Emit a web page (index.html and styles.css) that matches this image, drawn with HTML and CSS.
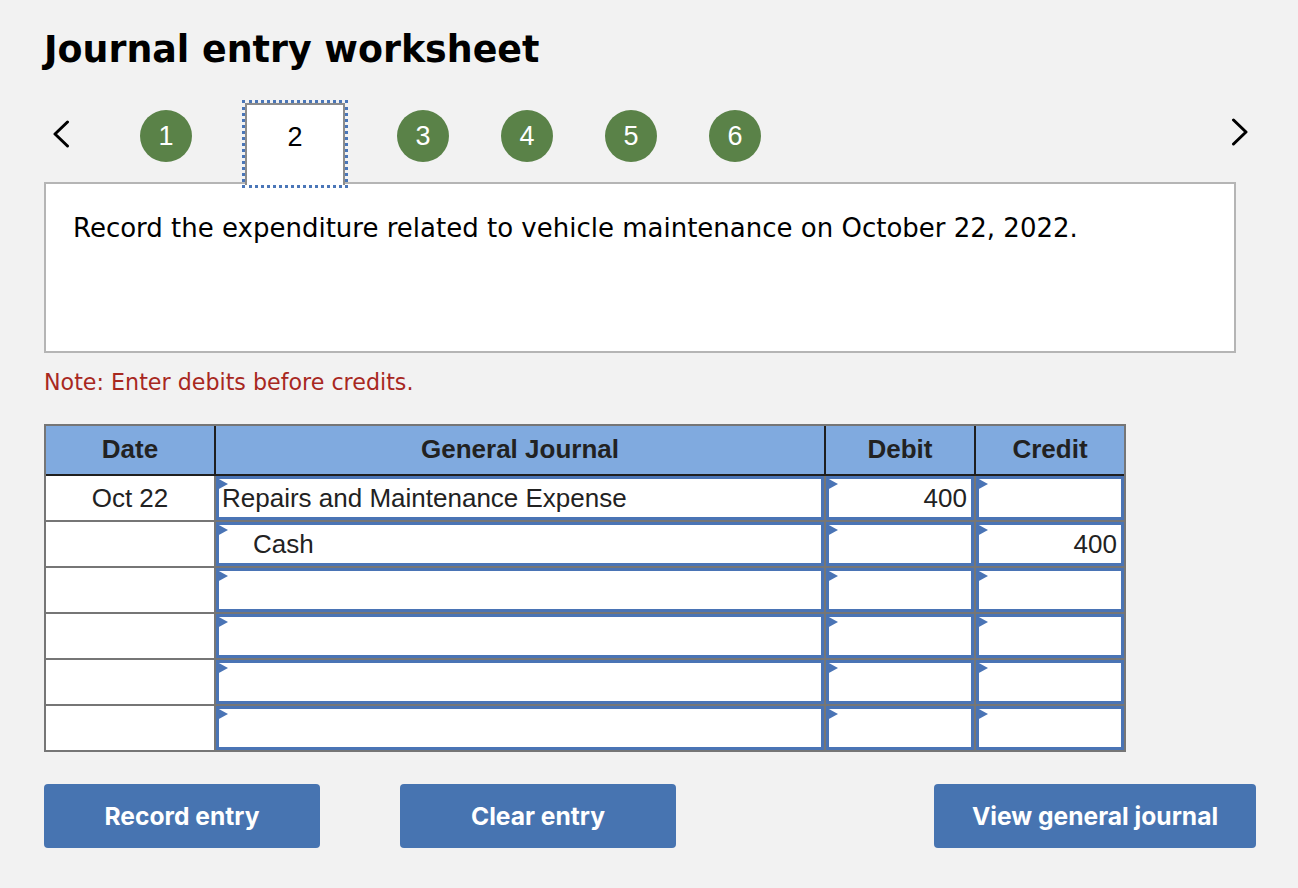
FILE: index.html
```html
<!DOCTYPE html>
<html lang="en">
<head>
<meta charset="utf-8">
<title>Journal entry worksheet</title>
<link rel="stylesheet" href="styles.css">
</head>
<body>
<div class="page">
  <h1 class="title">Journal entry worksheet</h1>

  <div class="nav">
    <span class="arrow arrow-left">
      <svg width="18" height="28" viewBox="0 0 18 28"><polyline points="15.5,2 3,14 15.5,26" fill="none" stroke="#000" stroke-width="3" stroke-linecap="round" stroke-linejoin="round"/></svg>
    </span>
    <div class="steps">
      <span class="step">1</span>
      <span class="tab">2</span>
      <span class="step">3</span>
      <span class="step">4</span>
      <span class="step">5</span>
      <span class="step">6</span>
    </div>
    <span class="arrow arrow-right">
      <svg width="18" height="28" viewBox="0 0 18 28"><polyline points="2.5,2 15,14 2.5,26" fill="none" stroke="#000" stroke-width="3" stroke-linecap="round" stroke-linejoin="round"/></svg>
    </span>
  </div>

  <div class="prompt">Record the expenditure related to vehicle maintenance on October 22, 2022.</div>

  <p class="note">Note: Enter debits before credits.</p>

  <div class="journal">
    <div class="jhead">
      <div>Date</div>
      <div>General Journal</div>
      <div>Debit</div>
      <div>Credit</div>
    </div>
    <div class="jbody">
      <div class="date">Oct 22</div>
      <div class="cell">Repairs and Maintenance Expense</div>
      <div class="cell num">400</div>
      <div class="cell num"></div>

      <div class="date"></div>
      <div class="cell indent">Cash</div>
      <div class="cell num"></div>
      <div class="cell num">400</div>

      <div class="date"></div>
      <div class="cell"></div>
      <div class="cell num"></div>
      <div class="cell num"></div>

      <div class="date"></div>
      <div class="cell"></div>
      <div class="cell num"></div>
      <div class="cell num"></div>

      <div class="date"></div>
      <div class="cell"></div>
      <div class="cell num"></div>
      <div class="cell num"></div>

      <div class="date"></div>
      <div class="cell"></div>
      <div class="cell num"></div>
      <div class="cell num"></div>
    </div>
  </div>

  <div class="actions">
    <div class="actions-left">
      <button class="btn btn-narrow">Record entry</button>
      <button class="btn btn-narrow">Clear entry</button>
    </div>
    <button class="btn btn-wide">View general journal</button>
  </div>
</div>
</body>
</html>
```

FILE: styles.css
```css
html, body {
  margin: 0;
  padding: 0;
  background: #f2f2f2;
}

.page {
  padding: 0 42px 0 44px;
  font-family: "DejaVu Sans", Verdana, sans-serif;
  color: #000;
}

.title {
  margin: 28px 0 0 0;
  font-family: "DejaVu Sans", Verdana, sans-serif;
  font-weight: bold;
  font-size: 36.4px;
  line-height: 44px;
}

/* step navigation */
.nav {
  display: flex;
  align-items: flex-start;
  margin-top: 31px;
}

.arrow {
  display: block;
  width: 18px;
  height: 28px;
}

.arrow svg {
  display: block;
}

.arrow-left {
  margin: 17px 0 0 8px;
}

.arrow-right {
  margin: 15px 7px 0 auto;
}

.steps {
  display: flex;
  align-items: flex-start;
  gap: 52px;
  margin-left: 70px;
}

.step {
  width: 52px;
  height: 52px;
  margin-top: 7px;
  border-radius: 50%;
  background: #5a8248;
  color: #fff;
  display: flex;
  align-items: center;
  justify-content: center;
  font-family: "Liberation Sans", Arial, sans-serif;
  font-size: 27px;
  line-height: 1;
}

.tab {
  position: relative;
  z-index: 2;
  box-sizing: border-box;
  width: 100px;
  height: 82px;
  margin-left: 1px;
  margin-bottom: -3px;
  padding-top: 19px;
  background: #fff;
  border: 2px solid #8c8c8c;
  border-bottom: none;
  outline: 3px dotted #4a76b8;
  outline-offset: 0;
  text-align: center;
  font-family: "Liberation Sans", Arial, sans-serif;
  font-size: 27px;
  line-height: 26px;
  color: #000;
}

/* prompt box */
.prompt {
  box-sizing: border-box;
  width: 1192px;
  height: 171px;
  background: #fff;
  border: 2px solid #b5b5b5;
  padding: 29px 0 0 27px;
  font-size: 26px;
  line-height: 30px;
  color: #000;
}

.note {
  margin: 16px 0 0 0;
  font-size: 22.2px;
  line-height: 26px;
  color: #a8281f;
}

/* journal table */
.journal {
  box-sizing: border-box;
  width: 1082px;
  margin-top: 29px;
  border: 2px solid #767676;
  font-family: "Liberation Sans", Arial, sans-serif;
  font-size: 26px;
  color: #222;
}

.jhead {
  display: grid;
  grid-template-columns: 168px 608px 148px 148px;
  column-gap: 2px;
  background: #1f1f1f;
  padding-bottom: 2px;
}

.jhead > div {
  background: #80aadf;
  height: 48px;
  line-height: 46px;
  text-align: center;
  font-weight: bold;
}

.jbody {
  display: grid;
  grid-template-columns: 168px 608px 148px 148px;
  grid-auto-rows: 44px;
  gap: 2px;
  background: #767676;
}

.date {
  background: #fff;
  text-align: center;
  line-height: 44px;
}

.cell {
  position: relative;
  box-sizing: border-box;
  background: #fff;
  border: 3px solid #4a74b5;
  line-height: 38px;
  padding: 0 4px 0 3px;
  white-space: nowrap;
}

.cell::before {
  content: "";
  position: absolute;
  left: -2px;
  top: -1px;
  width: 0;
  height: 0;
  border-left: 11px solid #4a74b5;
  border-top: 6px solid transparent;
  border-bottom: 6px solid transparent;
}

.cell.indent {
  padding-left: 34px;
}

.cell.num {
  text-align: right;
}

/* buttons */
.actions {
  display: flex;
  align-items: center;
  margin-top: 32px;
}

.actions-left {
  display: flex;
  gap: 80px;
}

.btn {
  height: 64px;
  border: none;
  border-radius: 4px;
  background: #4774b1;
  color: #fff;
  font-family: Inter, Roboto, "Liberation Sans", sans-serif;
  font-weight: bold;
  font-size: 24.6px;
  padding: 0;
  cursor: pointer;
}

.btn-narrow {
  width: 276px;
}

.btn-wide {
  width: 322px;
  margin-left: auto;
}
```
